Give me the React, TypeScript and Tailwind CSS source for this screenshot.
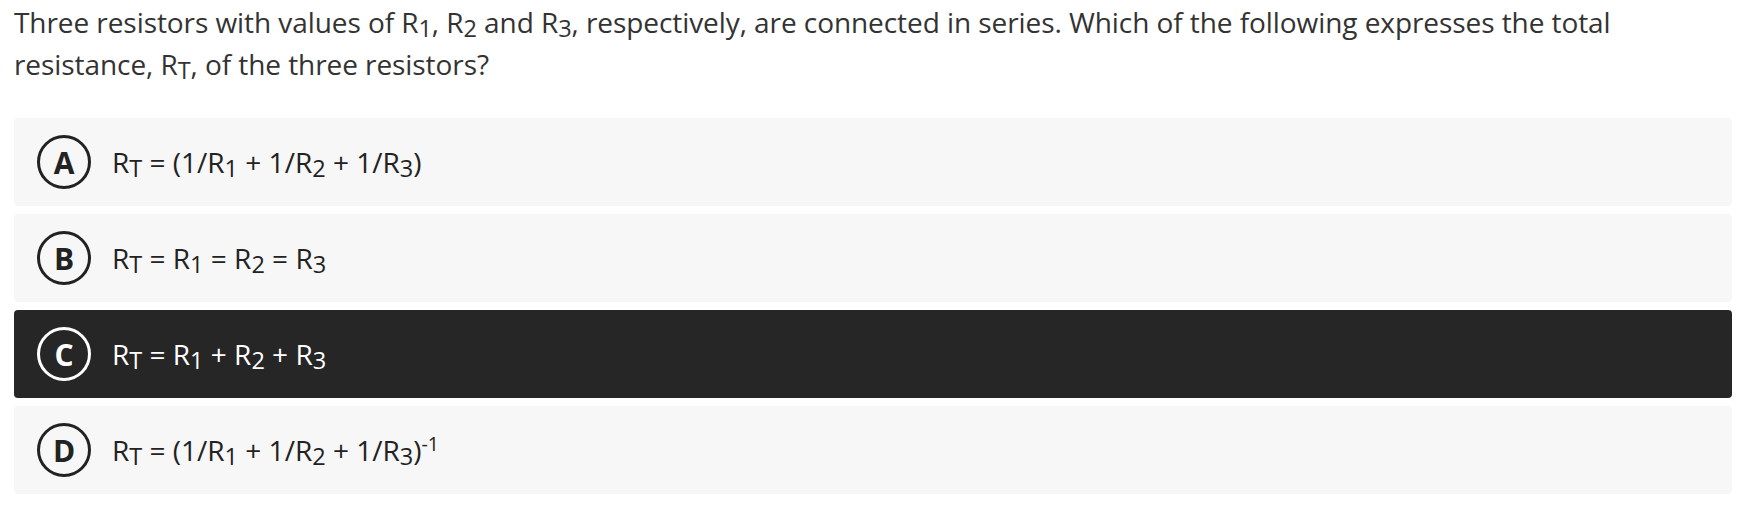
import React from "react"

type Option = {
  letter: string
  content: React.ReactNode
  selected?: boolean
}

const R = ({ n }: { n: string }) => (
  <>
    R<sub className="bottom-[-0.18em] text-[0.84em]">{n}</sub>
  </>
)

const options: Option[] = [
  {
    letter: "A",
    content: (
      <>
        <R n="T" /> = (1/<R n="1" /> + 1/<R n="2" /> + 1/<R n="3" />)
      </>
    ),
  },
  {
    letter: "B",
    content: (
      <>
        <R n="T" /> = <R n="1" /> = <R n="2" /> = <R n="3" />
      </>
    ),
  },
  {
    letter: "C",
    selected: true,
    content: (
      <>
        <R n="T" /> = <R n="1" /> + <R n="2" /> + <R n="3" />
      </>
    ),
  },
  {
    letter: "D",
    content: (
      <>
        <R n="T" /> = (1/<R n="1" /> + 1/<R n="2" /> + 1/<R n="3" />)
        <sup className="text-[0.7em]">-1</sup>
      </>
    ),
  },
]

export default function App() {
  return (
    <div className="min-h-[526px] bg-white pl-[14px] pr-[30px] pt-[1px] font-['Open_Sans',sans-serif]">
      {/* Question */}
      <p className="pr-[24px] text-[28px] leading-[42px] tracking-[-0.07px] text-[#333]">
        Three resistors with values of <R n="1" />, <R n="2" /> and <R n="3" />, respectively, are
        connected in series. Which of the following expresses the total resistance, <R n="T" />, of
        the three resistors?
      </p>

      {/* Answer choices */}
      <div className="mt-[33px] flex flex-col gap-2">
        {options.map((opt) => (
          <div
            key={opt.letter}
            className={
              opt.selected
                ? "flex h-[88px] items-center gap-[21px] rounded bg-[#262626] pl-[23px] text-white"
                : "flex h-[88px] items-center gap-[21px] rounded bg-[#f7f7f7] pl-[23px] text-[#222]"
            }
          >
            <div
              className={
                opt.selected
                  ? "flex h-[54px] w-[54px] shrink-0 items-center justify-center rounded-full border-[3px] border-white text-[30px] font-bold"
                  : "flex h-[54px] w-[54px] shrink-0 items-center justify-center rounded-full border-[3px] border-[#222] text-[30px] font-bold"
              }
            >
              {opt.letter}
            </div>
            <div className="text-[28px] leading-none">{opt.content}</div>
          </div>
        ))}
      </div>
    </div>
  )
}
